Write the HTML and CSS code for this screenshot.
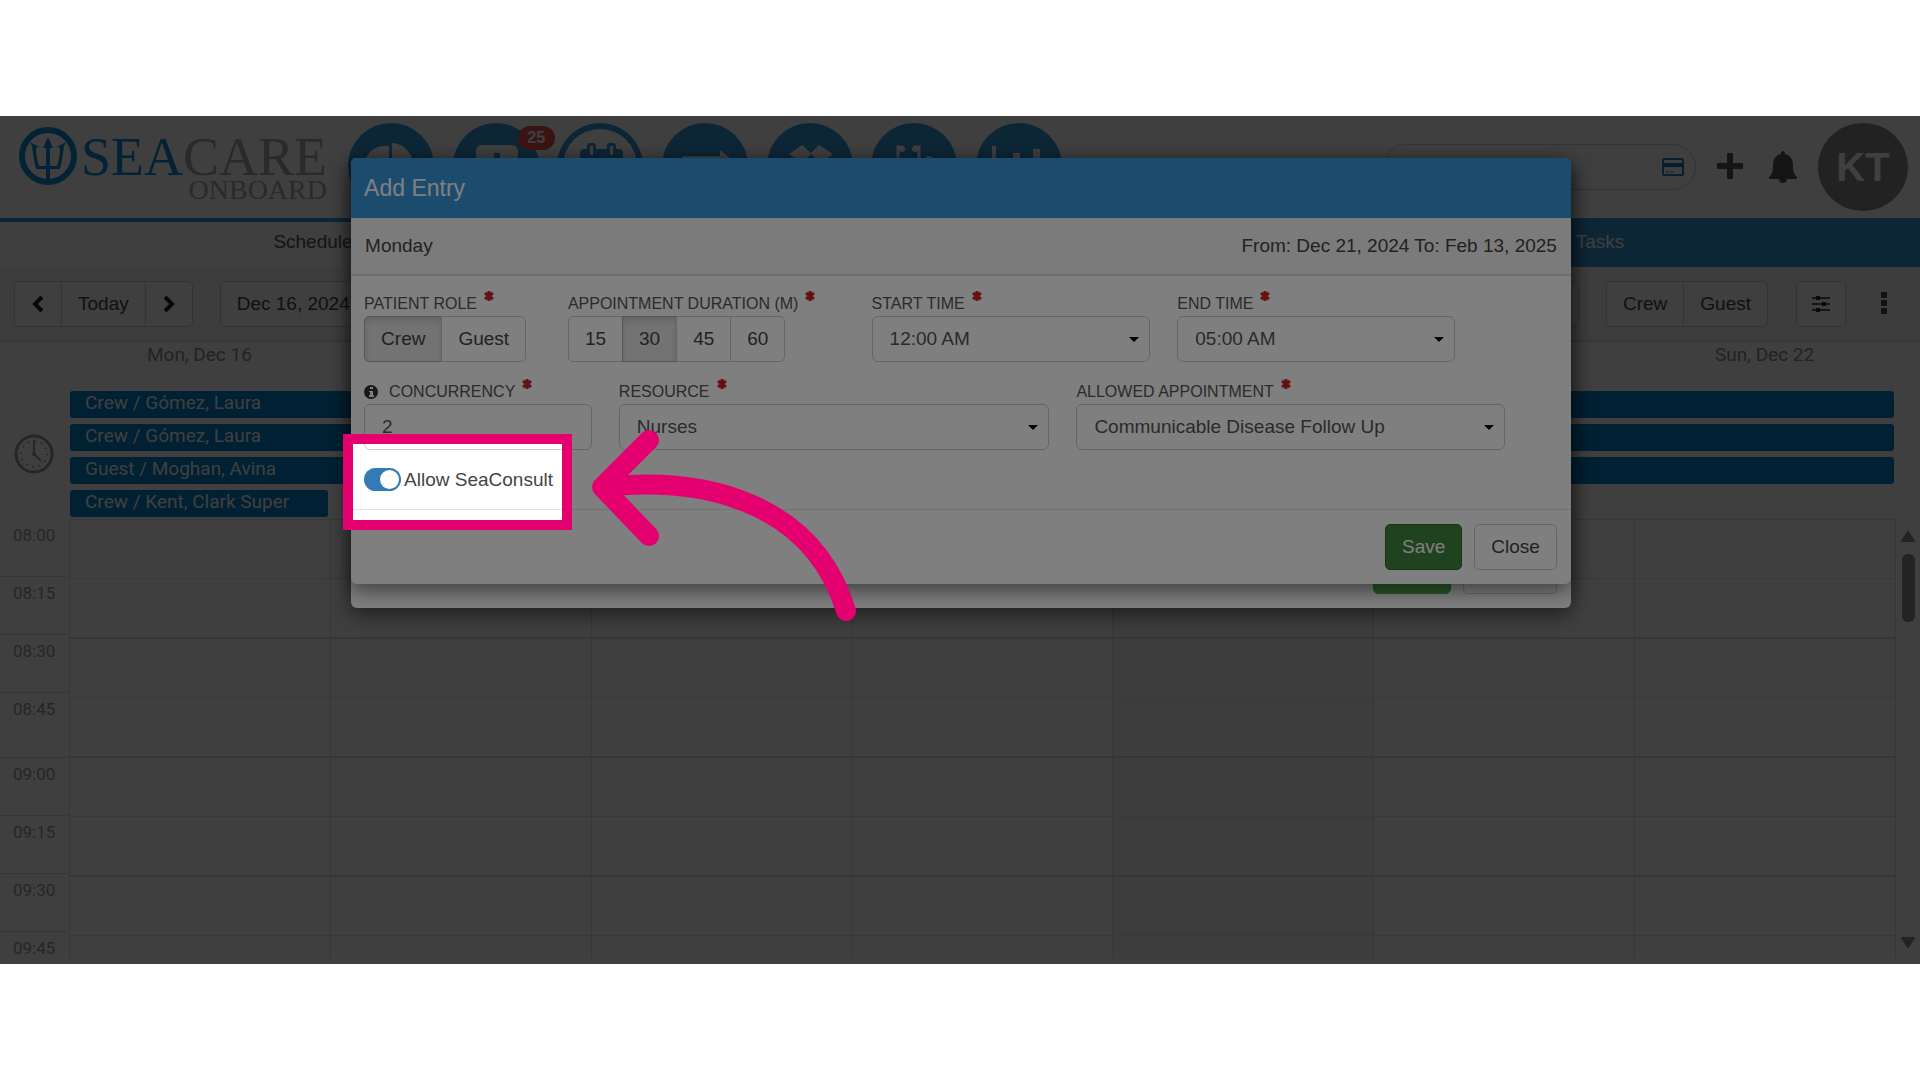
FILE: index.html
```html
<!DOCTYPE html>
<html lang="en">
<head>
<meta charset="utf-8">
<title>SeaCare Onboard - Schedule</title>
<link rel="stylesheet" href="styles.css">
</head>
<body>
<main class="stage">
  <div class="app">
    <header class="topbar">
      <div class="logo">
        <svg class="logo-mark" viewBox="0 0 60 60" aria-hidden="true">
          <circle cx="30" cy="30" r="26" fill="none" stroke="#1088d4" stroke-width="6"/>
          <path d="M30 11l5 11h-3v18h7c2-6 3-12 3-18l-3-1 9-5-2 4c-1 8-2 15-4 23H32v12h-4V43H18c-2-8-3-15-4-23l-2-4 9 5-3 1c0 6 1 12 3 18h7V22h-3z" fill="#1088d4"/>
        </svg>
        <div class="logo-text">
          <span class="logo-name"><span class="logo-sea">SEA</span>CARE</span>
          <span class="logo-sub">ONBOARD</span>
        </div>
      </div>
      <nav class="modules">
        <a class="module" href="#" aria-label="Dashboard"><svg viewBox="0 0 87 87"><circle cx="43" cy="43" r="43"/><path class="w" d="M41 23v22L24 60A21 21 0 0 1 41 23zM44 20a22 22 0 0 1 21 23H44z"/></svg></a>
        <a class="module" href="#" aria-label="Messages"><svg viewBox="0 0 87 87"><circle cx="43" cy="43" r="43"/><rect class="w" x="23" y="22" width="42" height="42" rx="6"/><path d="M41 30h6v11h11v6H47v11h-6V47H30v-6h11z"/></svg><span class="badge">25</span></a>
        <a class="module" href="#" aria-label="Calendar"><svg viewBox="0 0 87 87"><circle cx="43" cy="43" r="43"/><circle class="w" cx="43" cy="43" r="37"/><path d="M30 26v-3q0-3 3-3h3q3 0 3 3v3h11v-3q0-3 3-3h3q3 0 3 3v3h3q4 0 4 4v34H23V30q0-4 4-4z"/><path class="w" d="M33 23h3v9h-3zM53 23h3v9h-3z"/></svg></a>
        <a class="module" href="#" aria-label="Transfers"><svg viewBox="0 0 87 87"><circle cx="43" cy="43" r="43"/><path class="w" d="M20 33h38v-6l11 9-11 9v-6H20z"/></svg></a>
        <a class="module" href="#" aria-label="Inventory"><svg viewBox="0 0 87 87"><circle cx="43" cy="43" r="43"/><path class="w" d="M35 22l9 8 8-8 14 9-12 9-10-9-9 9-13-9z"/></svg></a>
        <a class="module" href="#" aria-label="Clinic"><svg viewBox="0 0 87 87"><circle cx="43" cy="43" r="43"/><path class="tube" d="M32 24h-5v19q0 8 10 8t11-8V24h-5"/><circle class="w" cx="31" cy="26" r="3"/><circle class="w" cx="44" cy="26" r="3"/><circle class="w" cx="58" cy="38" r="5"/></svg></a>
        <a class="module" href="#" aria-label="Reports"><svg viewBox="0 0 87 87"><circle cx="43" cy="43" r="43"/><path class="w" d="M16 23h4v37h-4zM37 30h7v30h-7zM57 26h7v34h-7z"/></svg></a>
      </nav>
      <div class="account">
        <div class="search">
          <input type="search" aria-label="Search">
          <svg class="card-icon" viewBox="0 0 22 18" aria-hidden="true"><rect x="1" y="1" width="20" height="16" rx="1" fill="none" stroke="#2a80c8" stroke-width="2"/><path d="M1 5h20v4H1z" fill="#2070b8"/><path d="M4 14h3M8 14h4" stroke="#2a80c8"/></svg>
        </div>
        <button class="icon-btn" aria-label="Add"><svg width="26" height="26" viewBox="0 0 26 26"><path d="M11 0h4q1 0 1 1v9h9q1 0 1 1v4q0 1-1 1h-9v9q0 1-1 1h-4q-1 0-1-1v-9H1q-1 0-1-1v-4q0-1 1-1h9V1q0-1 1-1z"/></svg></button>
        <button class="icon-btn bell" aria-label="Notifications"><svg width="30" height="32" viewBox="0 0 30 32"><path d="M15 0q2 0 2 3c5 1 8 5 8 11 0 7 1 9 4 12q1 2-1 2H2q-2 0-1-2c3-3 4-5 4-12 0-6 3-10 8-11q0-3 2-3zM11 28h8q0 4-4 4t-4-4z"/></svg></button>
        <span class="avatar">KT</span>
      </div>
    </header>
    <nav class="tabs">
      <a class="tab tab-active" href="#">Schedule</a>
      <a class="tab tab-tasks" href="#">Tasks</a>
    </nav>
    <div class="toolbar">
      <div class="group">
        <button class="btn nav-btn" aria-label="Previous"><svg width="12" height="18" viewBox="0 0 12 18"><path d="M10 2L3 9l7 7" fill="none" stroke="#222" stroke-width="4"/></svg></button>
        <button class="btn">Today</button>
        <button class="btn nav-btn" aria-label="Next"><svg width="12" height="18" viewBox="0 0 12 18"><path d="M2 2l7 7-7 7" fill="none" stroke="#222" stroke-width="4"/></svg></button>
      </div>
      <button class="btn date-btn">Dec 16, 2024</button>
      <button class="btn view-btn" aria-label="View"></button>
      <div class="group">
        <button class="btn">Crew</button>
        <button class="btn">Guest</button>
      </div>
      <button class="btn filter-btn" aria-label="Filters"><svg width="18" height="16" viewBox="0 0 18 16"><path d="M0 2h18M0 8h18M0 14h18" stroke="#222" stroke-width="1.5"/><path d="M4 0h4v4H4zM10 6h4v4h-4zM4 12h4v4H4z" fill="#222"/></svg></button>
      <button class="more-btn" aria-label="More"><svg width="6" height="22" viewBox="0 0 6 22"><path d="M0 0h6v6H0zM0 8h6v6H0zM0 16h6v6H0z" fill="#444"/></svg></button>
    </div>
    <section class="calendar">
      <div class="day-heads">
        <span class="day-head">Mon, Dec 16</span>
        <span class="day-head day-last">Sun, Dec 22</span>
      </div>
      <div class="all-day">
        <svg class="clock" viewBox="0 0 40 40" aria-hidden="true"><circle cx="20" cy="20" r="18" fill="none" stroke="#999" stroke-width="3"/><circle cx="20" cy="20" r="13" fill="none" stroke="#999" stroke-width="2" stroke-dasharray="1.5 5.3"/><path d="M20 6v14l7 7" fill="none" stroke="#999" stroke-width="2"/><circle cx="20" cy="20" r="2" fill="#999"/></svg>
        <div class="events">
          <a class="event" href="#">Crew / Gómez, Laura</a>
          <a class="event" href="#">Crew / Gómez, Laura</a>
          <a class="event" href="#">Guest / Moghan, Avina</a>
          <a class="event event-day" href="#">Crew / Kent, Clark Super</a>
        </div>
      </div>
      <div class="time-grid">
        <div class="times">
          <span>08:00</span><span>08:15</span><span>08:30</span><span>08:45</span>
          <span>09:00</span><span>09:15</span><span>09:30</span><span>09:45</span>
        </div>
        <div class="day-cols">
          <div></div><div></div><div></div><div></div><div class="today"></div><div></div><div></div>
        </div>
        <div class="scrollbar">
          <svg width="14" height="12" viewBox="0 0 14 12"><path d="M7 1l6 9H1z" fill="#8c8c8c" stroke="#8c8c8c" stroke-width="2" stroke-linejoin="round"/></svg>
          <span class="thumb"></span>
          <svg width="14" height="12" viewBox="0 0 14 12"><path d="M7 11l6-9H1z" fill="#8c8c8c" stroke="#8c8c8c" stroke-width="2" stroke-linejoin="round"/></svg>
        </div>
      </div>
    </section>
  </div>
  <div class="backdrop"></div>
  <div class="dialogs">
    <div class="dialog dialog-back">
      <button class="btn btn-save" aria-label="Save schedule"></button>
      <button class="btn" aria-label="Close schedule"></button>
    </div>
    <form class="dialog dialog-front">
      <h2 class="dialog-title">Add Entry</h2>
      <div class="dialog-sub"><span>Monday</span><span>From: Dec 21, 2024 To: Feb 13, 2025</span></div>
      <div class="dialog-body">
        <div class="row row-first">
          <div class="field">
            <span class="label">PATIENT ROLE <svg class="req" viewBox="0 0 10 10"><path d="M5 0v10M1 2l8 6M9 2L1 8"/></svg></span>
            <div class="group">
              <button type="button" class="btn btn-on">Crew</button>
              <button type="button" class="btn">Guest</button>
            </div>
          </div>
          <div class="field">
            <span class="label">APPOINTMENT DURATION (M) <svg class="req" viewBox="0 0 10 10"><path d="M5 0v10M1 2l8 6M9 2L1 8"/></svg></span>
            <div class="group">
              <button type="button" class="btn">15</button>
              <button type="button" class="btn btn-on">30</button>
              <button type="button" class="btn">45</button>
              <button type="button" class="btn">60</button>
            </div>
          </div>
          <div class="field">
            <label class="label" for="start">START TIME <svg class="req" viewBox="0 0 10 10"><path d="M5 0v10M1 2l8 6M9 2L1 8"/></svg></label>
            <div class="select"><select id="start" class="control"><option>12:00 AM</option></select></div>
          </div>
          <div class="field">
            <label class="label" for="end">END TIME <svg class="req" viewBox="0 0 10 10"><path d="M5 0v10M1 2l8 6M9 2L1 8"/></svg></label>
            <div class="select"><select id="end" class="control"><option>05:00 AM</option></select></div>
          </div>
        </div>
        <div class="row row-second">
          <div class="field">
            <label class="label" for="conc"><svg class="info" viewBox="0 0 14 14"><circle cx="7" cy="7" r="7" fill="#333"/><path d="M6 2h3v2H6zM5 6h4v4h1v2H5v-2h1V7H5z" fill="#fff"/></svg>CONCURRENCY <svg class="req" viewBox="0 0 10 10"><path d="M5 0v10M1 2l8 6M9 2L1 8"/></svg></label>
            <input id="conc" class="control" type="text" value="2">
          </div>
          <div class="field">
            <label class="label" for="resource">RESOURCE <svg class="req" viewBox="0 0 10 10"><path d="M5 0v10M1 2l8 6M9 2L1 8"/></svg></label>
            <div class="select"><select id="resource" class="control"><option>Nurses</option></select></div>
          </div>
          <div class="field">
            <label class="label" for="allowed">ALLOWED APPOINTMENT <svg class="req" viewBox="0 0 10 10"><path d="M5 0v10M1 2l8 6M9 2L1 8"/></svg></label>
            <div class="select"><select id="allowed" class="control"><option>Communicable Disease Follow Up</option></select></div>
          </div>
        </div>
        <div class="consult">
          <input id="consult" class="toggle" type="checkbox" role="switch" checked>
          <label for="consult">Allow SeaConsult</label>
          <div class="spotlight"></div>
          <svg class="arrow" viewBox="0 0 270 200" aria-hidden="true"><path d="M58 17L11 64l47 49M14 64C115 53 222 80 255 188"/></svg>
        </div>
      </div>
      <div class="dialog-foot">
        <button type="button" class="btn btn-save">Save</button>
        <button type="button" class="btn">Close</button>
      </div>
    </form>
  </div>
</main>
</body>
</html>
```

FILE: styles.css
```css
* { box-sizing: border-box; }

body {
  margin: 0;
  height: 100vh;
  padding: 116px 0;
  background: #fff;
  color: #333;
  font: 19px/24px "Liberation Sans", Arial, sans-serif;
}

a { color: inherit; text-decoration: none; }
button, input, select { font: inherit; color: inherit; }

.stage {
  position: relative;
  height: 100%;
  overflow: hidden;
}

.app {
  height: 100%;
  display: flex;
  flex-direction: column;
  background: #fff;
}

/* top bar */
.topbar {
  display: flex;
  flex: none;
  align-items: flex-start;
  height: 102px;
  padding: 7px 12px 0 18px;
}

.logo { display: flex; width: 330px; padding-top: 3px; }
.logo-mark { width: 60px; height: 60px; }
.logo-text {
  display: flex;
  flex-direction: column;
  align-items: flex-end;
  width: 249px;
  padding-top: 5px;
  color: #a8a8a8;
  font-family: "Liberation Serif", "Times New Roman", serif;
}
.logo-name { font-size: 54px; line-height: 52px; }
.logo-sea { color: #1088d4; }
.logo-sub { font-size: 28px; line-height: 14px; }

.modules { display: flex; justify-content: space-between; width: 715px; }
.module { position: relative; width: 87px; height: 87px; }
.module svg { display: block; width: 87px; height: 87px; fill: #3498db; }
.module .w { fill: #fff; }
.module .tube { fill: none; stroke: #fff; stroke-width: 3; }
.badge {
  position: absolute;
  left: 65px;
  top: 3px;
  width: 37px;
  border-radius: 12px;
  background: #e8524a;
  color: #fff;
  font-size: 16px;
  font-weight: bold;
  text-align: center;
}

.account {
  display: flex;
  align-items: flex-start;
  margin-left: auto;
}
.search {
  display: flex;
  align-items: center;
  width: 313px;
  height: 46px;
  margin: 21px 21px 0 0;
  padding: 0 11px;
  border: 1px solid #ccc;
  border-radius: 23px;
}
.search input { flex: 1; min-width: 0; border: 0; outline: 0; background: none; }
.card-icon { width: 22px; height: 18px; }
.icon-btn { margin: 30px 25px 0 0; padding: 0; border: 0; background: none; fill: #555; }
.icon-btn svg { display: block; }
.bell { margin: 28px 20px 0 0; }
.avatar {
  width: 90px;
  border-radius: 50%;
  background: #8a8a8a;
  color: #fff;
  font-size: 40px;
  font-weight: bold;
  line-height: 88px;
  text-align: center;
}

/* tabs */
.tabs {
  display: grid;
  flex: none;
  grid-template-columns: repeat(3, 1fr);
  height: 49px;
  border-top: 4px solid #3498db;
  background: #3498db;
}
.tab { line-height: 40px; text-align: center; color: #fff; }
.tab-active { padding-right: 14px; background: #fff; color: #555; }
.tab-tasks { grid-column: 3; }

/* toolbar */
.toolbar {
  display: flex;
  flex: none;
  align-items: center;
  height: 75px;
  padding: 0 33px 0 14px;
  border-bottom: 2px solid #ddd;
  background: #f6f6f6;
}
.btn {
  height: 46px;
  padding: 0 16px;
  border: 1px solid #ccc;
  border-radius: 5px;
  background: #fff;
  color: #444;
}
.nav-btn { width: 48px; padding: 0 17px; }
.btn svg { display: block; }
.group { display: inline-flex; }
.group .btn + .btn { margin-left: -1px; border-top-left-radius: 0; border-bottom-left-radius: 0; }
.group .btn:not(:last-child) { border-top-right-radius: 0; border-bottom-right-radius: 0; }
.date-btn { margin-left: 27px; }
.view-btn { width: 120px; margin: 0 27px 0 auto; }
.filter-btn { width: 50px; margin: 0 35px 0 28px; padding: 0 15px; }
.more-btn { padding: 4px 0 0; border: 0; background: none; }

/* calendar */
.calendar {
  display: flex;
  flex: 1;
  flex-direction: column;
  min-height: 0;
  font-family: Roboto, sans-serif;
}
.day-heads {
  display: grid;
  flex: none;
  grid-template-columns: repeat(7, 1fr);
  height: 49px;
  padding: 1px 25px 0 69px;
  color: #8c8c8c;
  text-align: center;
}
.day-last { grid-column: 7; }
.all-day {
  display: grid;
  flex: none;
  grid-template-columns: 70px 1fr;
  align-items: center;
  padding: 0 26px 2px 0;
}
.clock { width: 40px; height: 40px; margin-left: 14px; }
.events {
  display: grid;
  grid-template-columns: repeat(7, 1fr);
  row-gap: 6px;
}
.event {
  grid-column: span 7;
  height: 27px;
  padding-left: 15px;
  border-radius: 3px;
  background: #0080cc;
  color: #fff;
  white-space: nowrap;
}
.event-day { grid-column: span 1; margin-right: 3px; }

.time-grid {
  display: flex;
  flex: 1;
  min-height: 0;
  margin-bottom: 5px;
  overflow: hidden;
}
.times {
  display: flex;
  flex: none;
  flex-direction: column;
  width: 69px;
  color: #999;
  font-size: 17px;
}
.times span {
  flex: none;
  height: 58px;
  padding: 4px 0 0 13px;
  border-bottom: 1px solid #ddd;
}
.times span:nth-child(4n) { height: 65px; }
.day-cols {
  display: grid;
  flex: 1;
  grid-template-columns: repeat(7, 1fr);
  border-top: 1px solid #e0e0e0;
  border-right: 1px solid #e0e0e0;
}
.day-cols div {
  border-left: 1px solid #e0e0e0;
  background-image: repeating-linear-gradient(transparent 0 58px, #e6e6e6 58px 59px, transparent 59px 117px, #dadada 117px 119px);
}
.day-cols .today { background-color: #f5f5f5; }
.scrollbar {
  display: flex;
  flex: none;
  flex-direction: column;
  align-items: center;
  width: 24px;
  padding: 12px 0 11px;
}
.thumb { width: 13px; height: 68px; margin: 11px 0 auto; border-radius: 6px; background: #8c8c8c; }

/* dialogs */
.backdrop { position: absolute; inset: 0; background: rgba(0, 0, 0, .5); }
.dialogs {
  position: absolute;
  inset: 42px 0 auto;
  display: grid;
  justify-content: center;
  grid-template-columns: 63.6%;
  padding-left: 2px;
}
.dialog {
  grid-area: 1 / 1;
  border-radius: 6px;
  background: #fff;
  box-shadow: 0 7px 20px rgba(0, 0, 0, .5);
}
.dialog-back {
  display: flex;
  align-items: flex-end;
  justify-content: flex-end;
  gap: 12px;
  padding: 14px;
}
.dialog-back .btn { width: 94px; }
.dialog-back .btn-save { width: 78px; background: #4fae4f; border-color: #4cae4c; }
.dialog-front { margin-bottom: 24px; }
.dialog-title {
  margin: 0;
  padding-left: 13px;
  border-radius: 5px 5px 0 0;
  background: #3898db;
  color: #fff;
  font-size: 23px;
  font-weight: normal;
  line-height: 60px;
}
.dialog-sub {
  display: flex;
  justify-content: space-between;
  padding: 16px 14px;
  border-bottom: 2px solid #ddd;
  background: #f6f6f6;
  color: #444;
}
.dialog-body {
  display: flex;
  flex-direction: column;
  padding: 15px 13px 18px;
  color: #444;
}
.row { display: grid; margin-bottom: 17px; }
.row-first { grid-template-columns: 204fr 304fr 306fr 305fr 76fr; }
.row-second { grid-template-columns: 255fr 458fr 456fr 26fr; }
.field { display: flex; flex-direction: column; padding-right: 27px; }
.label { display: flex; align-items: center; height: 25px; color: #555; font-size: 16px; white-space: nowrap; }
.req {
  width: 10px;
  height: 10px;
  margin: 0 0 15px 7px;
  fill: none;
  stroke: #cc2222;
  stroke-width: 3;
}
.info { width: 14px; height: 14px; margin-right: 11px; }
.control {
  width: 100%;
  height: 46px;
  padding: 0 17px;
  border: 1px solid #ccc;
  border-radius: 6px;
  background: #fff;
  color: #555;
  appearance: none;
}
.select { position: relative; }
.select::after {
  content: "";
  position: absolute;
  right: 11px;
  top: 21px;
  border: 5px solid transparent;
  border-top-color: #000;
  border-bottom: 0;
  pointer-events: none;
}
.btn-on {
  border-color: #aaa;
  background: #e6e6e6;
  box-shadow: inset 0 4px 6px rgba(0, 0, 0, .12);
}

.consult {
  position: relative;
  display: flex;
  align-items: center;
  gap: 3px;
  height: 23px;
  margin-top: 1px;
}
.toggle {
  display: flex;
  width: 37px;
  height: 23px;
  margin: 0;
  padding: 2px;
  border-radius: 12px;
  background: #337ab7;
  appearance: none;
}
.toggle::before {
  content: "";
  width: 19px;
  height: 19px;
  margin-left: auto;
  border-radius: 50%;
  background: #fff;
}

.dialog-foot {
  display: flex;
  justify-content: flex-end;
  gap: 12px;
  padding: 14px;
  border-top: 1px solid #e5e5e5;
}
.btn-save { border-color: #2d6a2d; background: #3e843e; color: #fff; }

/* guide overlay: pink frame, dimmed surroundings and pointer arrow */
.spotlight {
  position: absolute;
  left: -21px;
  top: -34px;
  width: 229px;
  height: 96px;
  border: 10px solid #e5006f;
  box-shadow: 0 0 0 9999px rgba(0, 0, 0, .5);
  pointer-events: none;
}
.arrow {
  position: absolute;
  left: 227px;
  top: -45px;
  width: 270px;
  height: 200px;
  overflow: visible;
  fill: none;
  stroke: #e5006f;
  stroke-width: 20;
  stroke-linecap: round;
  stroke-linejoin: round;
}
```
